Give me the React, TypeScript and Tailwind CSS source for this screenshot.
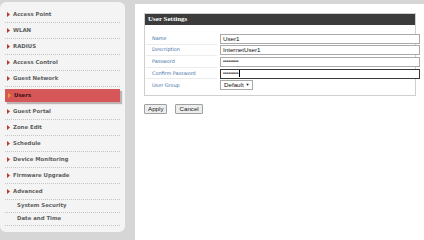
import React from "react";

const Arrow = ({ color = "#b8392e" }: { color?: string }) => (
  <svg width="3" height="5" viewBox="0 0 3 5" className="shrink-0">
    <path d="M0 0 L3 2.5 L0 5 Z" fill={color} />
  </svg>
);

const menuFont = { fontFamily: '"DejaVu Sans", Verdana, sans-serif' };

function MenuItem({ label }: { label: string }) {
  return (
    <div className="h-[16px] flex items-center gap-[3px] pl-[2px] border-b border-dotted border-[#c4c4c4]">
      <Arrow />
      <span className="text-[5.4px] font-bold text-[#606060] leading-none">{label}</span>
    </div>
  );
}

function SubItem({ label }: { label: string }) {
  return (
    <div className="h-[13px] flex items-center pl-[12px] border-b border-dotted border-[#c4c4c4]">
      <span className="text-[5.4px] font-bold text-[#606060] leading-none">{label}</span>
    </div>
  );
}

function Row({ label, children, last }: { label: string; children: React.ReactNode; last?: boolean }) {
  return (
    <div className="h-[11.6px] flex items-center">
      <div className={`w-[71px] shrink-0 h-full flex items-center pl-[6px] ${last ? "" : "border-b border-[#ececec]"}`}>
        <span className="text-[4.9px] text-[#4470a8] leading-none" style={{ fontFamily: '"DejaVu Sans", Verdana, sans-serif' }}>
          {label}
        </span>
      </div>
      <div className="ml-[3px] h-full flex items-center shrink-0">{children}</div>
    </div>
  );
}

const inputFont = { fontFamily: '"Liberation Sans", Arial, sans-serif' };

function TextBox({ value }: { value: string }) {
  return (
    <div className="w-[200px] h-[10px] flex items-center pl-[2px] bg-white border border-[#a9a9a9]">
      <span className="text-[6.2px] text-[#111] leading-none" style={inputFont}>
        {value}
      </span>
    </div>
  );
}

function PwBox({ focused }: { focused?: boolean }) {
  return (
    <div
      className={`w-[200px] h-[10px] flex items-center pl-[2px] bg-white border ${
        focused ? "border-[#3a3a3a]" : "border-[#a9a9a9]"
      }`}
    >
      <span className="text-[3.2px] text-[#111] leading-none tracking-[-0.2px]" style={inputFont}>
        ●●●●●●●●●
      </span>
      {focused && <span className="ml-[0.5px] w-[0.8px] h-[7px] bg-black" />}
    </div>
  );
}

export default function App() {
  return (
    <div className="w-[424px] h-[240px] bg-[#d6d6d6] flex overflow-hidden">
      <div className="w-[125px] h-[230px] mt-[2px] rounded-[6px] bg-[#f4f4f4] pt-[5px] px-[5px] shrink-0" style={menuFont}>
        <MenuItem label="Access Point" />
        <MenuItem label="WLAN" />
        <MenuItem label="RADIUS" />
        <MenuItem label="Access Control" />
        <MenuItem label="Guest Network" />
        <div className="h-[17px] pt-[2px]">
          <div className="h-[13px] w-[115px] bg-[#d65757] flex items-center gap-[3px] pl-[3px] shadow-[2px_2px_1px_rgba(90,60,60,0.35)]">
            <Arrow color="#f0a020" />
            <span className="text-[5.4px] font-bold text-[#3a1010] leading-none">Users</span>
          </div>
        </div>
        <MenuItem label="Guest Portal" />
        <MenuItem label="Zone Edit" />
        <MenuItem label="Schedule" />
        <MenuItem label="Device Monitoring" />
        <MenuItem label="Firmware Upgrade" />
        <MenuItem label="Advanced" />
        <SubItem label="System Security" />
        <SubItem label="Date and Time" />
      </div>

      <div className="flex-1 ml-[10px] mt-[4px] bg-white pl-[9px] pt-[9px]">
        <div className="w-[272px] border border-[#cfcfcf]">
          <div
            className="h-[11px] bg-[#3b3b3b] flex items-center pl-[3px] text-white font-bold text-[7px] leading-none"
            style={{ fontFamily: '"Liberation Serif", "Times New Roman", serif' }}
          >
            User Settings
          </div>
          <div className="pt-[8px] pb-[4px] pl-[1px]">
            <Row label="Name">
              <TextBox value="User1" />
            </Row>
            <Row label="Description">
              <TextBox value="InternetUser1" />
            </Row>
            <Row label="Password">
              <PwBox />
            </Row>
            <Row label="Confirm Password">
              <PwBox focused />
            </Row>
            <Row label="User Group" last>
              <div className="w-[33px] h-[10px] flex items-center pl-[3px] border border-[#a9a9a9] bg-white" style={inputFont}>
                <span className="text-[6.2px] text-[#111] leading-none">Default</span>
                <span className="text-[4px] ml-[2px] text-[#111] leading-none">▼</span>
              </div>
            </Row>
          </div>
        </div>
        <div className="flex gap-[8px] mt-[8px]" style={inputFont}>
          <div className="h-[10px] px-[3px] flex items-center border border-[#a0a0a0] bg-[#ededed] rounded-[1px] text-[6.2px] text-[#222] leading-none">
            Apply
          </div>
          <div className="h-[10px] px-[3px] flex items-center border border-[#a0a0a0] bg-[#ededed] rounded-[1px] text-[6.2px] text-[#222] leading-none">
            Cancel
          </div>
        </div>
      </div>
    </div>
  );
}
